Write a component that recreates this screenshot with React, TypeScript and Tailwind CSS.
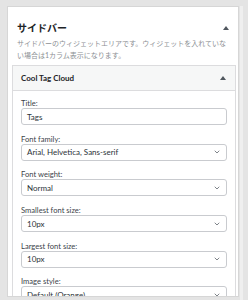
import { ChevronDown } from 'lucide-react';

const fields = [
  { label: 'Smallest font size:', value: '10px' },
  { label: 'Largest font size:', value: '10px' },
  { label: 'Image style:', value: 'Default (Orange)' },
];

function Caret() {
  return <span className="block w-0 h-0 border-x-[3px] border-x-transparent border-b-[4px] border-b-[#50575e]" />;
}

function Label({ children }: { children: string }) {
  return <div className="h-[10px] text-[7.6px] leading-[10px] text-[#3c434a]">{children}</div>;
}

function Select({ value }: { value: string }) {
  return (
    <div className="h-[17px] flex items-center justify-between pl-[5px] pr-[5px] border border-[#c9cbcf] rounded-[3px] bg-white text-[8px] text-[#2c3338]">
      <span>{value}</span>
      <ChevronDown size={8} strokeWidth={2.2} className="text-[#50575e]" />
    </div>
  );
}

export default function App() {
  return (
    <div
      className="w-[248px] h-[300px] overflow-hidden bg-[#e4e4e4] flex pt-[6px] pl-[7px]"
      style={{ fontFamily: 'Lato, "Noto Sans CJK JP", sans-serif' }}
    >
      <div className="w-[232px] h-[291px] bg-white border border-[#d6d6d6] pl-[4px] pr-[2px] overflow-hidden">
        {/* Section header */}
        <div className="flex items-center justify-between pl-[5px] pr-[7px] pt-[14px]">
          <span className="text-[10px] leading-[14px] font-bold text-[#1d2327]">サイドバー</span>
          <Caret />
        </div>
        <p className="mt-[2px] pl-[5px] pr-[6px] text-[7px] leading-[12px] text-[#8c8f94]">
          サイドバーのウィジェットエリアです。ウィジェットを入れていない場合は1カラム表示になります。
        </p>

        {/* Widget */}
        <div className="mt-[4px] border border-[#dcdcde]">
          <div className="h-[25px] flex items-center justify-between pl-[8px] pr-[9px] bg-[#f6f7f7] border-b border-[#dcdcde]">
            <span className="text-[8px] font-bold text-[#1d2327]">Cool Tag Cloud</span>
            <Caret />
          </div>
          <div className="px-[8px] pt-[7px] flex flex-col gap-[8.7px]">
            <div>
              <Label>Title:</Label>
              <div className="h-[17px] flex items-center pl-[5px] border border-[#c9cbcf] rounded-[3px] text-[8px] text-[#2c3338]">
                Tags
              </div>
            </div>
            <div>
              <Label>Font family:</Label>
              <Select value="Arial, Helvetica, Sans-serif" />
            </div>
            <div>
              <Label>Font weight:</Label>
              <Select value="Normal" />
            </div>
            {fields.map((f) => (
              <div key={f.label}>
                <Label>{f.label}</Label>
                <Select value={f.value} />
              </div>
            ))}
          </div>
        </div>
      </div>
      <div className="ml-[1px] w-[3px] h-full bg-[#efefef]" />
    </div>
  );
}
